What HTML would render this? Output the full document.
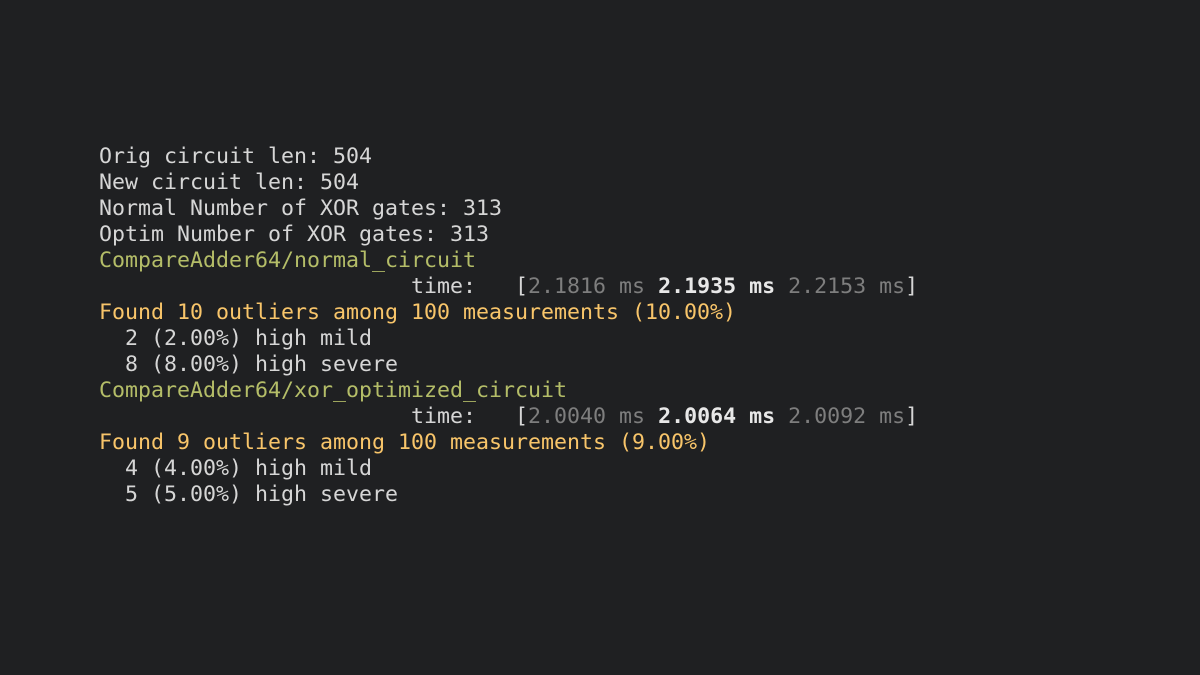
<!DOCTYPE html>
<html><head><meta charset="utf-8"><style>
html,body{margin:0;padding:0;background:#1f2022;width:1200px;height:675px;overflow:hidden}
pre{margin:0;position:absolute;left:99px;top:144px;font-family:"DejaVu Sans Mono","Liberation Mono",monospace;font-size:21.6px;line-height:26px;color:#d6d6d6}
.g{color:#b4bd68}.o{color:#f8c56a}.d{color:#7e7e7e}b{color:#e8e8e8}
</style></head><body><pre>Orig circuit len: 504
New circuit len: 504
Normal Number of XOR gates: 313
Optim Number of XOR gates: 313
<span class="g">CompareAdder64/normal_circuit</span>
                        time:   [<span class="d">2.1816 ms</span> <b>2.1935 ms</b> <span class="d">2.2153 ms</span>]
<span class="o">Found 10 outliers among 100 measurements (10.00%)</span>
  2 (2.00%) high mild
  8 (8.00%) high severe
<span class="g">CompareAdder64/xor_optimized_circuit</span>
                        time:   [<span class="d">2.0040 ms</span> <b>2.0064 ms</b> <span class="d">2.0092 ms</span>]
<span class="o">Found 9 outliers among 100 measurements (9.00%)</span>
  4 (4.00%) high mild
  5 (5.00%) high severe</pre></body></html>
